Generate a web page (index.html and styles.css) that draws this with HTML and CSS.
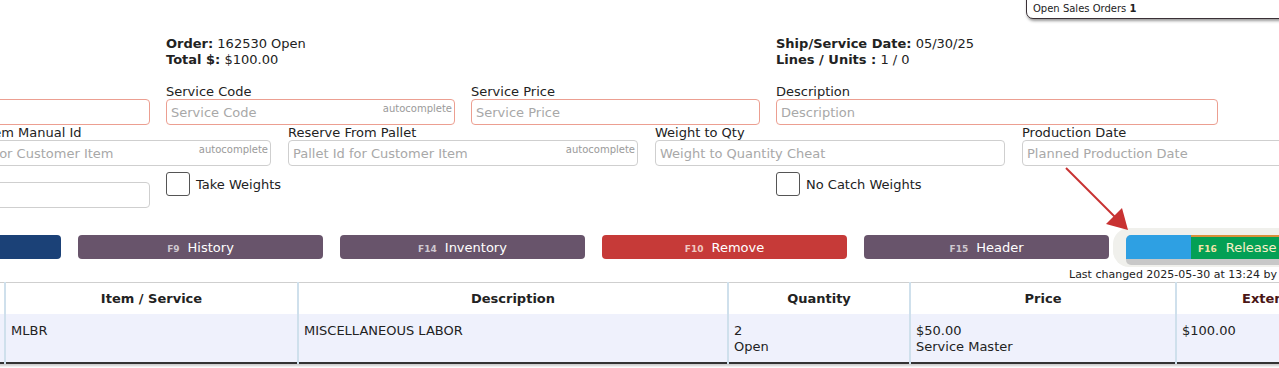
FILE: index.html
```html
<!DOCTYPE html>
<html lang="en">
<head>
    <meta charset="UTF-8">
    <meta name="viewport" content="width=device-width, initial-scale=1.0">
    <title>Sales Order 162530</title>
    <link rel="stylesheet" href="styles.css">
</head>
<body>
<div class="page">
    <div class="orders-box">Open Sales Orders <b>1</b></div>

    <div class="summary">
        <div></div>
        <div></div>
        <div>
            <div><b>Order:</b> 162530 Open</div>
            <div><b>Total $:</b> $100.00</div>
        </div>
        <div></div>
        <div>
            <div><b>Ship/Service Date:</b> 05/30/25</div>
            <div><b>Lines / Units :</b> 1 / 0</div>
        </div>
    </div>

    <div class="row row-six">
        <div></div>
        <div class="field">
            <label>Customer</label>
            <input class="req" type="text">
        </div>
        <div class="field">
            <label>Service Code</label>
            <div class="auto">
                <input class="req" type="text" placeholder="Service Code">
                <span class="auto-tag">autocomplete</span>
            </div>
        </div>
        <div class="field">
            <label>Service Price</label>
            <input class="req" type="text" placeholder="Service Price">
        </div>
        <div class="field">
            <label>Description</label>
            <input class="req" type="text" placeholder="Description">
        </div>
    </div>

    <div class="row row-five">
        <div></div>
        <div class="field">
            <label class="shift">Customer Item Manual Id</label>
            <div class="auto">
                <input type="text" placeholder="Manual Id for Customer Item">
                <span class="auto-tag">autocomplete</span>
            </div>
        </div>
        <div class="field">
            <label>Reserve From Pallet</label>
            <div class="auto">
                <input type="text" placeholder="Pallet Id for Customer Item">
                <span class="auto-tag">autocomplete</span>
            </div>
        </div>
        <div class="field">
            <label>Weight to Qty</label>
            <input type="text" placeholder="Weight to Quantity Cheat">
        </div>
        <div class="field">
            <label>Production Date</label>
            <input type="text" placeholder="Planned Production Date">
        </div>
    </div>

    <div class="row row-six row-checks">
        <div></div>
        <div class="field">
            <input type="text">
        </div>
        <div class="check"><span class="box"></span>Take Weights</div>
        <div></div>
        <div class="check"><span class="box"></span>No Catch Weights</div>
    </div>

    <div class="buttons">
        <button class="btn blue"><span class="key">F8</span>Save</button>
        <button class="btn plum"><span class="key">F9</span>History</button>
        <button class="btn plum"><span class="key">F14</span>Inventory</button>
        <button class="btn red"><span class="key">F10</span>Remove</button>
        <button class="btn plum"><span class="key">F15</span>Header</button>
        <div class="release-wrap">
            <div class="release">
                <span class="release-blue"></span>
                <span class="release-green"><span class="key">F16</span>Release</span>
            </div>
        </div>
    </div>

    <div class="last-changed">Last changed 2025-05-30 at 13:24 by user</div>

    <table class="lines">
        <colgroup>
            <col style="width:205px">
            <col style="width:293px">
            <col style="width:430px">
            <col style="width:182px">
            <col style="width:266px">
            <col style="width:200px">
        </colgroup>
        <thead>
            <tr>
                <th>Line</th>
                <th>Item / Service</th>
                <th>Description</th>
                <th>Quantity</th>
                <th>Price</th>
                <th class="ext">Extended</th>
            </tr>
        </thead>
        <tbody>
            <tr>
                <td>1</td>
                <td>MLBR</td>
                <td>MISCELLANEOUS LABOR</td>
                <td>2<br>Open</td>
                <td>$50.00<br>Service Master</td>
                <td>$100.00</td>
            </tr>
        </tbody>
    </table>

    <svg class="pointer" width="80" height="80" viewBox="0 0 80 80">
        <line x1="2" y1="2" x2="52" y2="52" stroke="#c83232" stroke-width="2"/>
        <polygon points="64,64 42,58 58,42" fill="#c83232"/>
    </svg>
</div>
</body>
</html>
```

FILE: styles.css
```css
body {
    margin: 0;
    font-family: "DejaVu Sans", Verdana, sans-serif;
    font-size: 13px;
    color: #222;
    overflow: hidden;
    background: #fff;
}
/* page is scrolled sideways: its left 200px lie off screen */
.page {
    position: relative;
    width: 1620px;
    height: 368px;
    margin-left: -200px;
}
.orders-box {
    position: absolute;
    left: 1226px;
    top: -10px;
    width: 300px;
    padding: 12px 6px 3px;
    font-size: 10px;
    line-height: 12px;
    border: 1px solid #3a3036;
    border-radius: 0 0 0 7px;
    box-shadow: 1px 2px 3px #999;
    background: #fff;
}

.summary {
    display: grid;
    grid-template-columns: 45px 289px 289px 289px 442px;
    column-gap: 16px;
    padding-top: 36px;
    line-height: 16px;
}

.row {
    display: grid;
}
.row-six {
    grid-template-columns: 45px 289px 289px 289px 442px;
    column-gap: 16px;
}
.row-five {
    grid-template-columns: 105px 349px 350px 350px 350px;
    column-gap: 17px;
}
.summary + .row {
    margin-top: 16px;
}
.field label {
    display: block;
    line-height: 15px;
    height: 15px;
    white-space: nowrap;
}
.field label.shift {
    margin-left: -5px;
}
.field input {
    display: block;
    box-sizing: border-box;
    width: 100%;
    height: 26px;
    margin: 0;
    padding: 0 4px;
    font-family: inherit;
    font-size: 13px;
    border: 1px solid #cfcfcf;
    border-radius: 4px;
    background: #fff;
}
.field input.req {
    border-color: #ec9f91;
}
.field input::placeholder {
    color: #a8a8a8;
}
.auto {
    position: relative;
}
.auto-tag {
    position: absolute;
    right: 3px;
    top: 4px;
    font-size: 10px;
    color: #9a9a9a;
}

.row-checks {
    margin-top: 16px;
    align-items: start;
}
.check {
    display: flex;
    align-items: center;
    margin-top: -10px;
}
.check .box {
    width: 22px;
    height: 22px;
    border: 1px solid #555;
    border-radius: 3px;
    margin-right: 6px;
}

.buttons {
    display: grid;
    grid-template-columns: repeat(5, 245px) 260px;
    column-gap: 17px;
    margin-top: 27px;
    padding-left: 16px;
    align-items: start;
}
.btn {
    height: 24px;
    border: none;
    border-radius: 4px;
    font-family: inherit;
    font-size: 13px;
    color: #fff;
    padding: 0;
}
.btn .key, .release .key {
    font-size: 9px;
    font-weight: bold;
    color: #cfc8d0;
    margin-right: 8px;
}
.blue { background: #1b4177; }
.plum { background: #68546b; }
.red { background: #c63a38; }
.red .key { color: #f0c8c0; }
.release-wrap {
    margin: -7px 0 -8px -13px;
    padding: 7px 0 0 13px;
    background: #f0f0ec;
    border-radius: 16px 0 0 16px;
    height: 32px;
}
.release {
    display: flex;
    height: 30px;
    border-radius: 5px 0 0 5px;
    background: #c8c8c8;
    overflow: hidden;
}
.release-blue {
    width: 65px;
    height: 24px;
    background: #2ea0e3;
}
.release-green {
    flex: 1;
    height: 22px;
    line-height: 22px;
    background: #04a055;
    border-top: 2px solid #d9903a;
    color: #f7f0c8;
    padding-left: 7px;
    white-space: nowrap;
}
.release-green .key {
    color: #f2e4a8;
    margin-right: 9px;
}

.last-changed {
    font-size: 11px;
    line-height: 14px;
    padding-left: 1269px;
    margin-top: 9px;
    white-space: nowrap;
}

.lines {
    border-collapse: collapse;
    table-layout: fixed;
    width: 1576px;
    border-top: 1px solid #cfcfcf;
    border-bottom: 2px solid #333;
    box-shadow: 0 2px 2px #ccc;
}
.lines th, .lines td {
    border-left: 2px solid #cfe0ec;
    padding: 0 5px;
    text-align: left;
    vertical-align: top;
}
.lines th:first-child, .lines td:first-child {
    border-left: none;
}
.lines th {
    height: 31px;
    text-align: center;
    vertical-align: middle;
    font-weight: bold;
    background: #fff;
}
.lines th.ext {
    color: #4a1616;
}
.lines td {
    height: 49px;
    padding-top: 9px;
    line-height: 16px;
    box-sizing: border-box;
    background: #eff1fc;
}
.pointer {
    position: absolute;
    left: 1264px;
    top: 166px;
}
```
